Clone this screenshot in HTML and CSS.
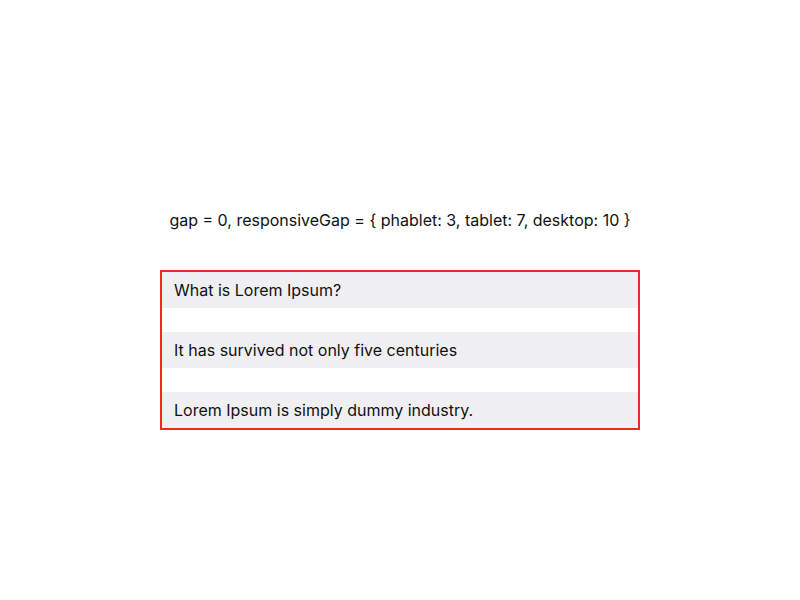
FILE: index.html
```html
<!DOCTYPE html>
<html>
<head>
<meta charset="utf-8">
<link rel="stylesheet" href="styles.css">
</head>
<body>
<main class="page">
  <p class="caption">gap = 0, responsiveGap = { phablet: 3, tablet: 7, desktop: 10 }</p>
  <div class="stack">
    <div class="item">What is Lorem Ipsum?</div>
    <div class="item">It has survived not only five centuries</div>
    <div class="item">Lorem Ipsum is simply dummy industry.</div>
  </div>
</main>
</body>
</html>
```
FILE: styles.css
```css
html, body {
  margin: 0;
  padding: 0;
  background: #ffffff;
}
body {
  font-family: Inter, "Noto Sans", sans-serif;
  font-size: 16px;
  color: #111111;
}
.page {
  display: flex;
  flex-direction: column;
  align-items: center;
  padding-top: 208px;
}
.caption {
  margin: 0;
  line-height: 24px;
  height: 24px;
}
.stack {
  margin-top: 38px;
  width: 476px;
  border: 2px solid #f02a1c;
  display: flex;
  flex-direction: column;
  gap: 24px;
}
.item {
  background: #f0f0f2;
  height: 36px;
  line-height: 36px;
  padding: 0 12px;
}
```
